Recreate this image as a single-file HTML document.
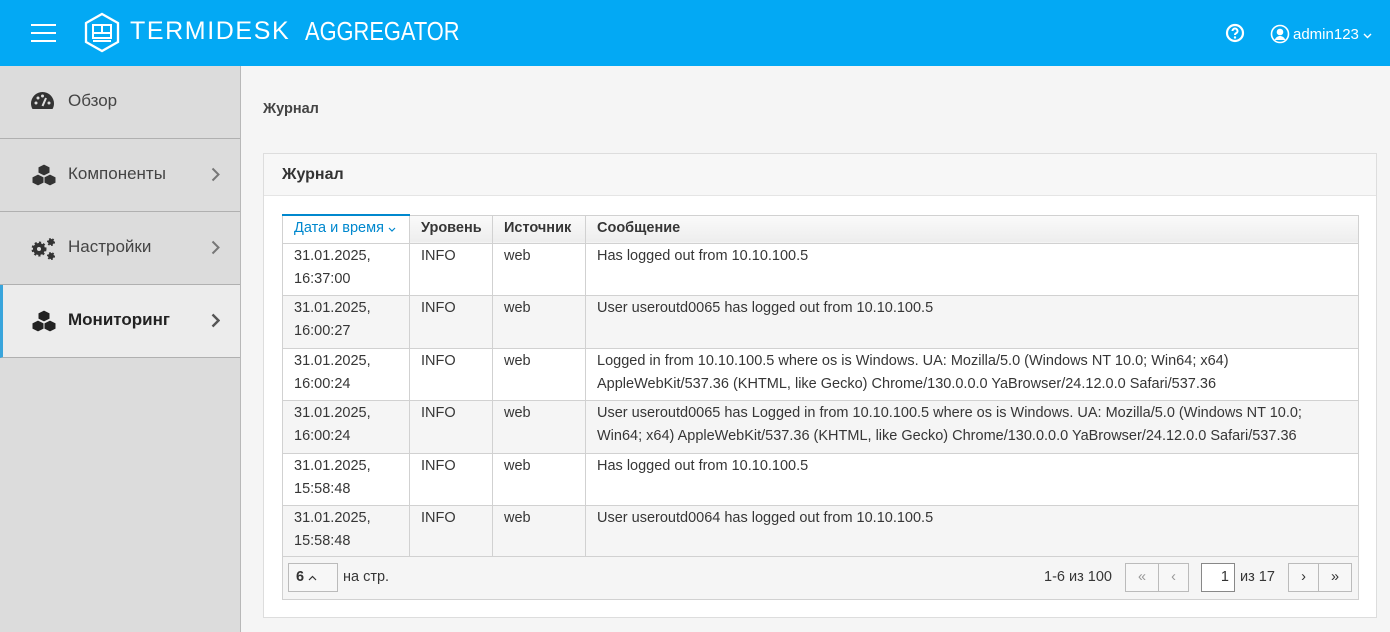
<!DOCTYPE html>
<html><head><meta charset="utf-8"><style>
*{box-sizing:border-box;margin:0;padding:0}
body{width:1390px;height:632px;overflow:hidden;background:#f5f5f5;font-family:"Liberation Sans","DejaVu Sans",sans-serif;color:#363636;position:relative}
.hdr{position:absolute;left:0;top:0;width:1390px;height:66px;background:#03a9f4;color:#fff}
.side{position:absolute;left:0;top:66px;width:241px;height:566px;background:#dcdcdc;border-right:1px solid #b8b8b8}
.item{position:absolute;left:0;width:240px;height:73px;border-bottom:1px solid #b0b0b0;font-size:17px;color:#444}
.item .t{position:absolute;left:68px;top:25px}
.item .ic{position:absolute;left:30px;top:25px}
.item .ch{position:absolute;left:211px;top:28px}
.panel{position:absolute;left:263px;top:153px;width:1114px;height:465px;background:#fff;border:1px solid #ddd}
.ptitle{height:42px;border-bottom:1px solid #e5e5e5;background:#f7f7f7;font-weight:bold;font-size:16px;padding:12px 0 0 18px;color:#333}
table{position:absolute;left:18px;top:60px;border-collapse:collapse;font-size:14.5px;table-layout:fixed;width:1077px}
td,th{border:1px solid #d1d1d1;vertical-align:top;padding:1px 11px 0 11px;line-height:23px;text-align:left;color:#363636}
th{height:28px;background:linear-gradient(#fafafa,#ededed);font-weight:bold;font-size:14.5px;padding-top:1px}
th.s{border-top:2px solid #0088ce;color:#0088ce;font-weight:normal;background:#fff}
tr.r td{height:52.5px}
tr.r:nth-child(odd) td{background:#f5f5f5}
.foot{position:absolute;left:18px;top:402px;width:1077px;height:44px;background:#f5f5f5;border:1px solid #d1d1d1;font-size:14.5px}
.btn{position:absolute;border:1px solid #bbb;background:#f7f7f7;height:29px;top:6px;text-align:center;line-height:27px;color:#999}
</style></head><body>
<div class="hdr">
 <div style="position:absolute;left:31px;top:24px;width:25px;height:2px;background:#fff;box-shadow:0 8px 0 #fff,0 16px 0 #fff"></div>
 <svg style="position:absolute;left:83px;top:12px" width="38" height="41" viewBox="0 0 38 41"><path d="M19 2 L35 11 L35 30 L19 39 L3 30 L3 11 Z" fill="none" stroke="#fff" stroke-width="2.3"/><rect x="10" y="13" width="18" height="13" fill="none" stroke="#fff" stroke-width="2"/><line x1="19" y1="13" x2="19" y2="21" stroke="#fff" stroke-width="2"/><line x1="10" y1="21" x2="28" y2="21" stroke="#fff" stroke-width="2"/><line x1="10" y1="29" x2="28" y2="29" stroke="#fff" stroke-width="2"/></svg>
 <div style="position:absolute;left:130px;top:17px;font-size:25px;letter-spacing:1.6px">TERMIDESK</div>
 <div style="position:absolute;left:305px;top:16px;font-size:26px;transform:scaleX(0.84);transform-origin:left top">AGGREGATOR</div>
 <svg style="position:absolute;left:1225px;top:23px" width="20" height="20" viewBox="0 0 20 20"><circle cx="10" cy="10" r="8" fill="none" stroke="#fff" stroke-width="2.2"/><path d="M7.5 8a2.5 2.5 0 1 1 3.5 2.3c-.7.4-1 .8-1 1.7" fill="none" stroke="#fff" stroke-width="2"/><circle cx="10" cy="14.5" r="1.2" fill="#fff"/></svg>
 <svg style="position:absolute;left:1270px;top:24px" width="20" height="20" viewBox="0 0 20 20"><circle cx="10" cy="10" r="8.5" fill="none" stroke="#fff" stroke-width="1.6"/><circle cx="10" cy="8" r="3.3" fill="#fff"/><path d="M4.5 16c1.5-3 3.5-4 5.5-4s4 1 5.5 4" fill="#fff"/></svg>
 <div style="position:absolute;left:1293px;top:26px;font-size:15px">admin123 <svg width="9" height="6" viewBox="0 0 9 6"><path d="M1 1l3.5 3.5L8 1" fill="none" stroke="#fff" stroke-width="1.4"/></svg></div>
</div>
<div class="side">
 <div class="item" style="top:0;height:73px"><svg class="ic" width="25" height="20" viewBox="0 0 25 20"><path d="M12.5 1A11.5 11.5 0 0 0 1 12.5c0 2 .5 3.8 1.5 5.5h20c1-1.7 1.5-3.5 1.5-5.5A11.5 11.5 0 0 0 12.5 1z" fill="#333"/><circle cx="6" cy="12" r="1.5" fill="#ddd"/><circle cx="8" cy="7" r="1.5" fill="#ddd"/><circle cx="12.5" cy="5" r="1.5" fill="#ddd"/><circle cx="19" cy="12" r="1.5" fill="#ddd"/><path d="M12.5 15 L16 7" stroke="#ddd" stroke-width="2"/></svg><span class="t">Обзор</span></div>
 <div class="item" style="top:73px"><svg class="ic" style="top:24px" width="28" height="24" viewBox="0 0 28 24"><g fill="#333" stroke="#dcdcdc" stroke-width="1"><path d="M14 1l6 3v6l-6 3-6-3V4z"/><path d="M8 11l6 3v6l-6 3-6-3v-6z"/><path d="M20 11l6 3v6l-6 3-6-3v-6z"/></g></svg><span class="t">Компоненты</span><svg class="ch" width="9" height="15" viewBox="0 0 9 15"><path d="M1.5 1.5l6 6-6 6" fill="none" stroke="#777" stroke-width="2"/></svg></div>
 <div class="item" style="top:146px"><svg class="ic" width="28" height="24" viewBox="0 0 28 24"><circle cx="9" cy="12" r="6" fill="#333" stroke="#333" stroke-width="3" stroke-dasharray="2 2"/><circle cx="9" cy="12" r="2" fill="#ddd"/><circle cx="21" cy="5" r="3" fill="#333" stroke="#333" stroke-width="2" stroke-dasharray="1.5 1.5"/><circle cx="21" cy="19" r="3" fill="#333" stroke="#333" stroke-width="2" stroke-dasharray="1.5 1.5"/></svg><span class="t">Настройки</span><svg class="ch" width="9" height="15" viewBox="0 0 9 15"><path d="M1.5 1.5l6 6-6 6" fill="none" stroke="#777" stroke-width="2"/></svg></div>
 <div class="item" style="top:219px;background:#ececec;border-left:3px solid #39a5dc"><svg class="ic" style="left:27px;top:24px" width="28" height="24" viewBox="0 0 28 24"><g fill="#222" stroke="#ececec" stroke-width="1"><path d="M14 1l6 3v6l-6 3-6-3V4z"/><path d="M8 11l6 3v6l-6 3-6-3v-6z"/><path d="M20 11l6 3v6l-6 3-6-3v-6z"/></g></svg><span class="t" style="left:65px;font-weight:bold;color:#222">Мониторинг</span><svg class="ch" style="left:208px" width="9" height="15" viewBox="0 0 9 15"><path d="M1.5 1.5l6 6-6 6" fill="none" stroke="#555" stroke-width="2.4"/></svg></div>
</div>
<div style="position:absolute;left:263px;top:101px;font-size:14.5px;font-weight:bold;color:#444">Журнал</div>
<div class="panel">
 <div class="ptitle">Журнал</div>
 <table>
  <colgroup><col style="width:127px"><col style="width:83px"><col style="width:93px"><col></colgroup>
  <tr><th class="s">Дата и время <svg width="8" height="5" viewBox="0 0 8 5"><path d="M1 1l3 3 3-3" fill="none" stroke="#0088ce" stroke-width="1.2"/></svg></th><th>Уровень</th><th>Источник</th><th>Сообщение</th></tr>
  <tr class="r"><td>31.01.2025,<br>16:37:00</td><td>INFO</td><td>web</td><td>Has logged out from 10.10.100.5</td></tr>
  <tr class="r"><td>31.01.2025,<br>16:00:27</td><td>INFO</td><td>web</td><td>User useroutd0065 has logged out from 10.10.100.5</td></tr>
  <tr class="r"><td>31.01.2025,<br>16:00:24</td><td>INFO</td><td>web</td><td>Logged in from 10.10.100.5 where os is Windows. UA: Mozilla/5.0 (Windows NT 10.0; Win64; x64) AppleWebKit/537.36 (KHTML, like Gecko) Chrome/130.0.0.0 YaBrowser/24.12.0.0 Safari/537.36</td></tr>
  <tr class="r"><td>31.01.2025,<br>16:00:24</td><td>INFO</td><td>web</td><td>User useroutd0065 has Logged in from 10.10.100.5 where os is Windows. UA: Mozilla/5.0 (Windows NT 10.0; Win64; x64) AppleWebKit/537.36 (KHTML, like Gecko) Chrome/130.0.0.0 YaBrowser/24.12.0.0 Safari/537.36</td></tr>
  <tr class="r"><td>31.01.2025,<br>15:58:48</td><td>INFO</td><td>web</td><td>Has logged out from 10.10.100.5</td></tr>
  <tr class="r"><td>31.01.2025,<br>15:58:48</td><td>INFO</td><td>web</td><td>User useroutd0064 has logged out from 10.10.100.5</td></tr>
 </table>
 <div class="foot">
  <div class="btn" style="left:5px;width:50px;color:#333;font-weight:bold;text-align:left;padding-left:7px">6 <svg width="9" height="6" viewBox="0 0 9 6"><path d="M1 5l3.5-3.5L8 5" fill="none" stroke="#333" stroke-width="1.2"/></svg></div>
  <div style="position:absolute;left:60px;top:12px">на стр.</div>
  <div style="position:absolute;left:761px;top:12px">1-6 из 100</div>
  <div class="btn" style="left:842px;width:34px">&laquo;</div>
  <div class="btn" style="left:875px;width:31px">&lsaquo;</div>
  <div class="btn" style="left:918px;width:34px;background:#fff;border-color:#888;color:#333;text-align:right;padding-right:5px">1</div>
  <div style="position:absolute;left:957px;top:12px">из 17</div>
  <div class="btn" style="left:1005px;width:31px;color:#333">&rsaquo;</div>
  <div class="btn" style="left:1035px;width:34px;color:#333">&raquo;</div>
 </div>
</div>
</body></html>
